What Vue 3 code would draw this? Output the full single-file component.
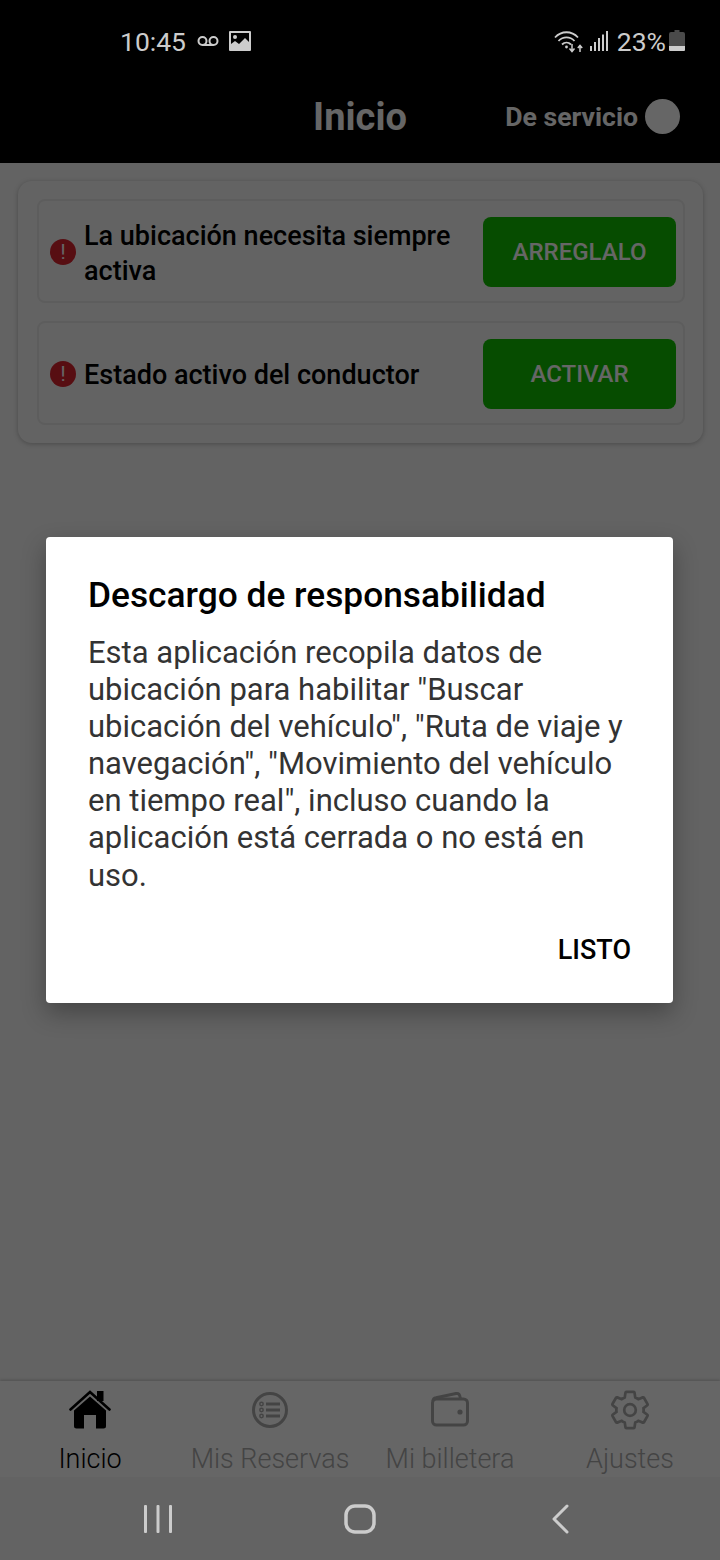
<script setup>
const tasks = [
  {id: 1, text: 'La ubicación necesita siempre activa', action: 'ARREGLALO'},
  {id: 2, text: 'Estado activo del conductor', action: 'ACTIVAR'},
];

const tabs = [
  {id: 'home', label: 'Inicio', active: true},
  {id: 'list', label: 'Mis Reservas'},
  {id: 'wallet', label: 'Mi billetera'},
  {id: 'gear', label: 'Ajustes'},
];

const gearPath = 'M19.43 12.98c.04-.32.07-.64.07-.98 0-.34-.03-.66-.07-.98l2.11-1.65c.19-.15.24-.42.12-.64l-2-3.46c-.09-.16-.26-.25-.44-.25-.06 0-.12.01-.17.03l-2.49 1c-.52-.4-1.08-.73-1.69-.98l-.38-2.65C14.46 2.18 14.25 2 14 2h-4c-.25 0-.46.18-.49.42l-.38 2.65c-.61.25-1.17.59-1.69.98l-2.49-1c-.06-.02-.12-.03-.18-.03-.17 0-.34.09-.43.25l-2 3.46c-.13.22-.07.49.12.64l2.11 1.65c-.04.32-.07.65-.07.98 0 .33.03.66.07.98l-2.11 1.65c-.19.15-.24.42-.12.64l2 3.46c.09.16.26.25.44.25.06 0 .12-.01.17-.03l2.49-1c.52.4 1.08.73 1.69.98l.38 2.65c.03.24.24.42.49.42h4c.25 0 .46-.18.49-.42l.38-2.65c.61-.25 1.17-.59 1.69-.98l2.49 1c.06.02.12.03.18.03.17 0 .34-.09.43-.25l2-3.46c.12-.22.07-.49-.12-.64l-2.11-1.65z';
</script>

<template>
  <div class="screen">
    <div class="status-bar">
      <span class="time">10:45</span>
      <svg class="voicemail" width="22" height="10" viewBox="0 0 22 10" fill="none" stroke="#ccc" stroke-width="2">
        <circle cx="5.5" cy="5" r="4" />
        <circle cx="16.5" cy="5" r="4" />
        <path d="M5.5 9h11" />
      </svg>
      <svg class="picture" width="22" height="20" viewBox="0 0 22 20">
        <path fill="#ccc" fill-rule="evenodd" d="M1 0h20a1 1 0 0 1 1 1v18a1 1 0 0 1-1 1H1a1 1 0 0 1-1-1V1a1 1 0 0 1 1-1zm1 2v11l4-3 4 3 6-6 4 4V2z" />
        <circle cx="6" cy="6" r="2" fill="#ccc" />
      </svg>
      <span class="spacer"></span>
      <svg class="wifi" width="30" height="23" viewBox="0 0 30 23" fill="none" stroke="#ccc" stroke-width="1.8">
        <path d="M1 7.5C7.5 .5 17.5 .5 24 7.5" />
        <path d="M4.5 11C9 6.2 16 6.2 20.5 11" />
        <path d="M8 14.5c2.6-2.6 6.4-2.6 9 0" />
        <circle cx="12.5" cy="17" r="1.4" fill="#ccc" stroke="none" />
        <path d="M18 14v7M15.5 18.5l2.5 3 2.5-3" stroke-width="1.5" />
        <path d="M26 22v-6M23.8 18l2.2-2.6 2.2 2.6" stroke-width="1.5" />
      </svg>
      <svg class="signal" width="18" height="20" viewBox="0 0 18 20" fill="#ccc">
        <rect x="0" y="15" width="2" height="5" />
        <rect x="4" y="11" width="2" height="9" />
        <rect x="8" y="7" width="2" height="13" />
        <rect x="12" y="3.500" width="2" height="16.500" />
        <rect x="16" y="0" width="2" height="20" />
      </svg>
      <span class="battery-text">23%</span>
      <svg class="battery" width="16" height="21" viewBox="0 0 16 21">
        <path fill="#4a4a4a" d="M5.500 0h5v2H14a2 2 0 0 1 2 2v12H0V4a2 2 0 0 1 2-2h3.500z" />
        <path fill="#ccc" d="M0 16h16v4a1 1 0 0 1-1 1H1a1 1 0 0 1-1-1z" />
      </svg>
    </div>

    <header class="app-header">
      <span></span>
      <h1>Inicio</h1>
      <div class="duty">
        <span>De servicio</span>
        <i class="knob"></i>
      </div>
    </header>

    <main class="content">
      <section class="card">
        <div v-for="task in tasks" :key="task.id" class="task">
          <span class="alert">!</span>
          <p class="task-text">{{ task.text }}</p>
          <button class="task-btn">{{ task.action }}</button>
        </div>
      </section>
    </main>

    <nav class="tabs">
      <div v-for="tab in tabs" :key="tab.id" class="tab" :class="{active: tab.active}">
        <svg v-if="tab.id === 'home'" width="42" height="40" viewBox="0 0 42 40">
          <path d="M1.500 19.500 21 2l19.500 17.500" fill="none" stroke="#000" stroke-width="2.600" stroke-linecap="round" />
          <rect x="28" y="1" width="6.500" height="10" fill="#000" />
          <path fill="#000" d="M21 6.500 37 20.500V36a2.500 2.500 0 0 1-2.500 2.500H27V25H15v13.500H7.500A2.500 2.500 0 0 1 5 36V20.500z" />
        </svg>
        <svg v-else-if="tab.id === 'list'" width="42" height="40" viewBox="0 0 42 40" fill="none" stroke="#aaa" stroke-width="3">
          <circle cx="21" cy="20" r="16.500" />
          <path d="M17 14h14M17 20h14M17 26h14" />
          <g stroke-width="1.500">
            <circle cx="12.500" cy="14" r="1.700" />
            <circle cx="12.500" cy="20" r="1.700" />
            <circle cx="12.500" cy="26" r="1.700" />
          </g>
        </svg>
        <svg v-else-if="tab.id === 'wallet'" width="42" height="40" viewBox="0 0 42 40" fill="none" stroke="#aaa" stroke-width="3">
          <rect x="3.500" y="9" width="35" height="26" rx="4" />
          <path d="M4 11c0-2 1-3 3-3.300L27 3.500c2.500-.5 4 .5 4.500 5.500" />
          <circle cx="31" cy="22" r="2.600" fill="#aaa" stroke="none" />
        </svg>
        <svg v-else width="42" height="40" viewBox="1.200 1 21.600 22" fill="none" stroke="#aaa" stroke-width="1.500">
          <path :d="gearPath" />
          <circle cx="12" cy="12" r="3.200" />
        </svg>
        <span class="tab-label">{{ tab.label }}</span>
      </div>
    </nav>

    <div class="sys-nav">
      <svg width="30" height="28" viewBox="0 0 30 28" fill="#ccc">
        <rect x="1" y="0" width="3" height="28" rx="1" />
        <rect x="13.500" y="0" width="3" height="28" rx="1" />
        <rect x="26" y="0" width="3" height="28" rx="1" />
      </svg>
      <svg class="home-btn" width="32" height="30" viewBox="0 0 32 30" fill="none" stroke="#ccc" stroke-width="3.500">
        <rect x="2" y="2" width="28" height="26" rx="9" />
      </svg>
      <svg width="20" height="30" viewBox="0 0 20 30" fill="none" stroke="#ccc" stroke-width="3" stroke-linecap="round" stroke-linejoin="round">
        <path d="M17 2 4 15l13 13" />
      </svg>
    </div>

    <div class="scrim">
      <div class="dialog">
        <h2>Descargo de responsabilidad</h2>
        <p>Esta aplicación recopila datos de ubicación para habilitar "Buscar ubicación del vehículo", "Ruta de viaje y navegación", "Movimiento del vehículo en tiempo real", incluso cuando la aplicación está cerrada o no está en uso.</p>
        <div class="dialog-actions">
          <button class="dialog-btn">LISTO</button>
        </div>
      </div>
    </div>
  </div>
</template>

<style>
html, body {
  margin: 0;
  background: #fff;
}
</style>

<style scoped>
.screen {
  position: relative;
  width: 720px;
  height: 1560px;
  display: flex;
  flex-direction: column;
  overflow: hidden;
  background: #f7f7f7;
  font-family: Roboto, "Liberation Sans", sans-serif;
}

.status-bar {
  position: relative;
  z-index: 2;
  height: 82px;
  box-sizing: border-box;
  padding: 26px 35px 0 120px;
  display: flex;
  align-items: flex-start;
  background: #000;
  color: #ccc;
}

.time {
  font-size: 26.500px;
  line-height: 32px;
}

.voicemail {
  margin: 10px 0 0 11px;
}

.picture {
  margin: 5px 0 0 10px;
}

.spacer {
  flex: 1;
}

.wifi {
  margin-top: 4px;
}

.signal {
  margin: 5px 0 0 6px;
}

.battery-text {
  margin-left: 9px;
  font-size: 26.500px;
  line-height: 32px;
}

.battery {
  margin: 4px 0 0 3px;
}

.app-header {
  height: 81px;
  box-sizing: border-box;
  padding: 0 40px 12px 0;
  display: grid;
  grid-template-columns: 1fr auto 1fr;
  align-items: center;
  background: #000;
  color: #fff;
}

.app-header h1 {
  margin: 0 0 0 40px;
  font-size: 38px;
  font-weight: 700;
}

.duty {
  justify-self: end;
  display: flex;
  align-items: center;
  gap: 7px;
  font-size: 26.600px;
  font-weight: 700;
}

.knob {
  width: 35px;
  height: 35px;
  border-radius: 50%;
  background: #fff;
}

.content {
  flex: 1;
  padding: 18px 17px 0 18px;
}

.card {
  padding: 18px 18px 18px 19px;
  display: flex;
  flex-direction: column;
  gap: 18px;
  border-radius: 14px;
  background: #f8f8f8;
  box-shadow: 0 1px 5px rgba(0, 0, 0, 0.25);
}

.task {
  height: 104px;
  box-sizing: border-box;
  padding: 1px 7px 0 11px;
  display: flex;
  align-items: center;
  border: 2px solid #e8e8e8;
  border-radius: 8px;
}

.alert {
  flex: none;
  width: 26px;
  height: 26px;
  border-radius: 50%;
  background: #d9232e;
  color: #fff;
  font-size: 20px;
  font-weight: 400;
  line-height: 26px;
  text-align: center;
}

.task-text {
  flex: 1;
  margin: 0 0 0 8px;
  padding-top: 4px;
  font-size: 27px;
  font-weight: 500;
  line-height: 35px;
  color: #000;
}

.task-btn {
  flex: none;
  width: 193px;
  height: 70px;
  padding: 0;
  border: 0;
  border-radius: 8px;
  background: #0fbf00;
  color: #fff;
  font-family: inherit;
  font-size: 24px;
  font-weight: 500;
}

.tabs {
  height: 96px;
  display: grid;
  grid-template-columns: repeat(4, 1fr);
  background: #fff;
  box-shadow: 0 -1px 3px rgba(0, 0, 0, 0.2);
}

.tab {
  padding-top: 9px;
  display: flex;
  flex-direction: column;
  align-items: center;
  color: #aaa;
}

.tab.active {
  color: #000;
}

.tab-label {
  margin-top: 12px;
  font-size: 27px;
  font-weight: 300;
  line-height: 34px;
  white-space: nowrap;
}

.sys-nav {
  position: relative;
  z-index: 2;
  height: 83px;
  display: flex;
  align-items: center;
  justify-content: space-between;
  padding: 0 150px 0 143px;
  background: #636363;
}

.home-btn {
  margin-left: -4px;
}

.scrim {
  position: absolute;
  inset: 0;
  z-index: 1;
  padding-top: 537px;
  box-sizing: border-box;
  background: rgba(0, 0, 0, 0.6);
}

.dialog {
  width: 627px;
  height: 466px;
  margin-left: 46px;
  box-sizing: border-box;
  padding: 38px 42px 0 42px;
  display: flex;
  flex-direction: column;
  border-radius: 4px;
  background: #fff;
  box-shadow: 0 10px 24px rgba(0, 0, 0, 0.3);
}

.dialog h2 {
  margin: 0;
  font-size: 35.300px;
  font-weight: 500;
  line-height: 40px;
  color: #000;
}

.dialog p {
  margin: 19px 0 0;
  font-size: 31px;
  line-height: 37.100px;
  color: #333;
}

.dialog-actions {
  margin-top: 40px;
  display: flex;
  justify-content: flex-end;
}

.dialog-btn {
  padding: 0;
  border: 0;
  background: none;
  color: #000;
  font-family: inherit;
  font-size: 27px;
  font-weight: 500;
}
</style>
